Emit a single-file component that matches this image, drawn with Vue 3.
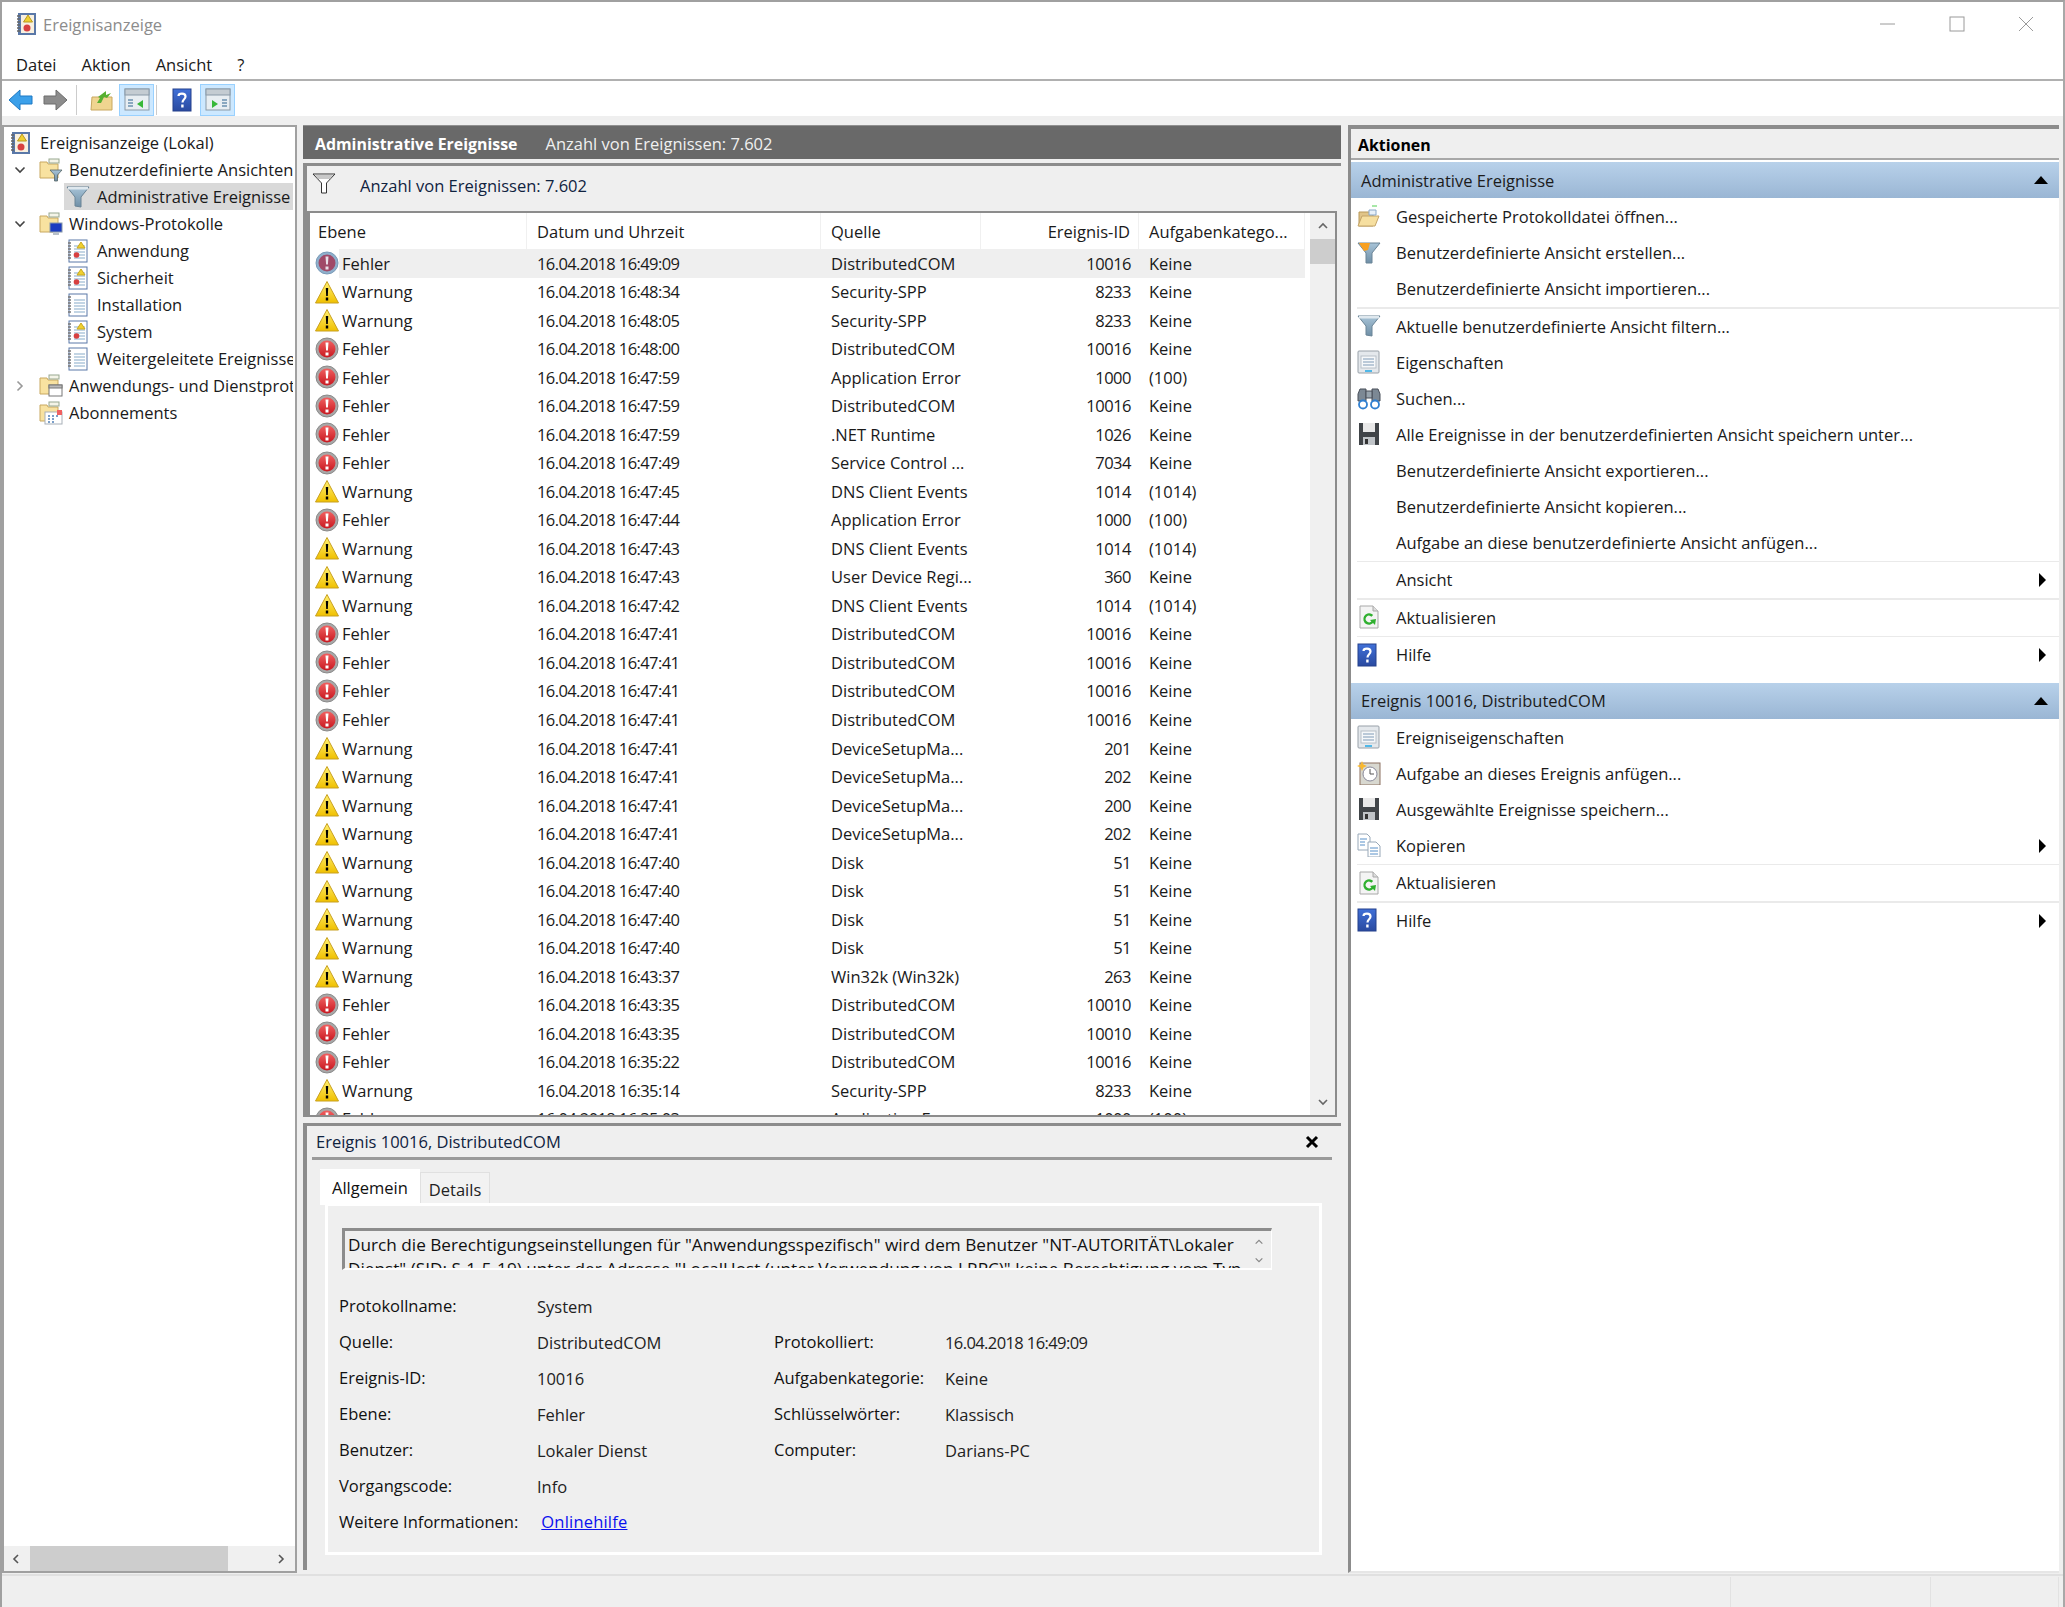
<template>
  <div class="win">
    <div class="titlebar">
      <svg class="appicon" viewBox="0 0 22 24"><use href="#ev-book" /></svg>
      <span class="title-text">Ereignisanzeige</span>
      <div class="winbtns">
        <svg width="16" height="16" viewBox="0 0 16 16"><path d="M0 8h15" stroke="#9a9a9a" fill="none" /></svg>
        <svg width="16" height="16" viewBox="0 0 16 16"><rect x="1" y="1" width="14" height="14" stroke="#9a9a9a" fill="none" /></svg>
        <svg width="16" height="16" viewBox="0 0 16 16"><path d="M1 1l14 14M15 1L1 15" stroke="#9a9a9a" fill="none" /></svg>
      </div>
    </div>

    <div class="menubar">
      <span>Datei</span><span>Aktion</span><span>Ansicht</span><span>?</span>
    </div>

    <div class="toolbar">
      <svg class="tb-ic first" viewBox="0 0 26 24"><path d="M1 12L12 2v6h12v8H12v6z" fill="#3ba0ea" stroke="#1c78c4" /></svg>
      <svg class="tb-ic" viewBox="0 0 26 24"><path d="M25 12L14 2v6H2v8h12v6z" fill="#8c8c8c" stroke="#6c6c6c" /></svg>
      <i class="tb-sep"></i>
      <svg class="tb-ic up" viewBox="0 0 24 24"><path d="M2 9h20v13H1z" fill="#f0d590" stroke="#c9a860" /><path d="M7 15l3-5-2-1 8-6v4l5-2-4 5-3-1-3 6z" fill="#58b030" /></svg>
      <span class="tb-on"><svg width="26" height="24" viewBox="0 0 26 24"><use href="#pane" /><path d="M19 12v8l-6-4z" fill="#38b838" /><path d="M4 12h5M4 15h5M4 18h5" stroke="#8aa8c0" stroke-width="2" /></svg></span>
      <i class="tb-sep"></i>
      <svg class="tb-ic help" viewBox="0 0 20 24"><use href="#help" /></svg>
      <span class="tb-on"><svg width="26" height="24" viewBox="0 0 26 24"><use href="#pane" /><path d="M7 12v8l6-4z" fill="#38b838" /><path d="M17 12h5M17 15h5M17 18h5" stroke="#8aa8c0" stroke-width="2" /></svg></span>
    </div>

    <div class="panes">
      <aside class="tree">
        <div class="tree-scroll">
          <div v-for="n in tree" :key="n.label" class="node" :class="['lv' + n.level, { on: n.on }]">
            <span class="twist">
              <svg v-if="n.twist" width="12" height="12" viewBox="0 0 12 12">
                <path v-if="n.twist === 'open'" d="M1.5 3.5L6 8l4.5-4.5" stroke="#444" stroke-width="1.6" fill="none" />
                <path v-else d="M3.5 1.5L8 6l-4.5 4.5" stroke="#999" stroke-width="1.6" fill="none" />
              </svg>
            </span>
            <svg class="node-ic" viewBox="0 0 24 24"><use :href="'#' + n.icon" /></svg>
            <span class="node-label">{{ n.label }}</span>
          </div>
        </div>
        <div class="hscroll">
          <svg width="12" height="12" viewBox="0 0 12 12"><path d="M8 2L4 6l4 4" stroke="#555" stroke-width="1.6" fill="none" /></svg>
          <div class="hthumb"></div>
          <svg width="12" height="12" viewBox="0 0 12 12"><path d="M4 2l4 4-4 4" stroke="#555" stroke-width="1.6" fill="none" /></svg>
        </div>
      </aside>

      <main class="center">
        <div class="darkbar">
          <b>Administrative Ereignisse</b>
          <span>Anzahl von Ereignissen: 7.602</span>
        </div>

        <section class="listpanel">
          <div class="filterbar">
            <svg width="24" height="22" viewBox="0 0 24 22"><use href="#funnel-plain" /></svg>
            <span>Anzahl von Ereignissen: 7.602</span>
          </div>
          <div class="listbox">
            <div class="listmain">
              <div class="thead">
                <div class="c-level">Ebene</div>
                <div class="c-date">Datum und Uhrzeit</div>
                <div class="c-src">Quelle</div>
                <div class="c-id">Ereignis-ID</div>
                <div class="c-cat">Aufgabenkatego...</div>
              </div>
              <div class="tbody">
                <div v-for="(r, i) in rows" :key="i" class="row" :class="{ sel: i === 0 }">
                  <div class="c-level">
                    <svg class="lvl-ic" viewBox="0 0 24 24"><use :href="r[0] === 'F' ? (i === 0 ? '#err-sel' : '#err') : '#warn'" /></svg>
                    <span class="lvl-text">{{ r[0] === 'F' ? 'Fehler' : 'Warnung' }}</span>
                  </div>
                  <div class="c-date">16.04.2018 {{ r[1] }}</div>
                  <div class="c-src">{{ r[2] }}</div>
                  <div class="c-id">{{ r[3] }}</div>
                  <div class="c-cat">{{ r[4] }}</div>
                </div>
              </div>
            </div>
            <div class="vscroll">
              <svg width="12" height="12" viewBox="0 0 12 12"><path d="M2 8l4-4 4 4" stroke="#666" stroke-width="1.6" fill="none" /></svg>
              <div class="vthumb"></div>
              <div class="vfill"></div>
              <svg width="12" height="12" viewBox="0 0 12 12"><path d="M2 4l4 4 4-4" stroke="#666" stroke-width="1.6" fill="none" /></svg>
            </div>
          </div>
        </section>

        <section class="detail">
          <div class="detail-head">
            <span>Ereignis 10016, DistributedCOM</span>
            <svg width="14" height="14" viewBox="0 0 14 14"><path d="M2 2l10 10M12 2L2 12" stroke="#000" stroke-width="3" fill="none" /></svg>
          </div>
          <div class="tabs">
            <div class="tab active">Allgemein</div>
            <div class="tab">Details</div>
          </div>
          <div class="tabbody">
            <div class="msgbox">
              <div class="msgtext">Durch die Berechtigungseinstellungen für "Anwendungsspezifisch" wird dem Benutzer "NT-AUTORITÄT\Lokaler Dienst" (SID: S-1-5-19) unter der Adresse "LocalHost (unter Verwendung von LRPC)" keine Berechtigung vom Typ</div>
              <div class="msgscroll">
                <svg width="10" height="10" viewBox="0 0 12 12"><path d="M2 8l4-4 4 4" stroke="#888" stroke-width="1.5" fill="none" /></svg>
                <svg width="10" height="10" viewBox="0 0 12 12"><path d="M2 4l4 4 4-4" stroke="#888" stroke-width="1.5" fill="none" /></svg>
              </div>
            </div>
            <div class="fields">
              <template v-for="f in fields" :key="f[0]">
                <div class="f-label">{{ f[0] }}</div>
                <div class="f-val">{{ f[1] }}</div>
                <div class="f-label">{{ f[2] }}</div>
                <div class="f-val" :class="{ tight: f[0] === 'Quelle:' }">{{ f[3] }}</div>
              </template>
            </div>
            <div class="moreinfo">
              <span class="f-label">Weitere Informationen:</span>
              <a href="#" class="link">Onlinehilfe</a>
            </div>
          </div>
        </section>
      </main>

      <aside class="actions">
        <div class="act-title">Aktionen</div>
        <template v-for="s in actionGroups" :key="s.head">
          <div class="act-head">
            <span>{{ s.head }}</span>
            <svg width="14" height="8" viewBox="0 0 14 8"><path d="M0 8L7 0l7 8z" fill="#000" /></svg>
          </div>
          <template v-for="a in s.items" :key="a.label">
            <div class="act-row">
              <span class="act-ic"><svg v-if="a.icon" width="24" height="24" viewBox="0 0 24 24"><use :href="'#' + a.icon" /></svg></span>
              <span class="act-label">{{ a.label }}</span>
              <svg v-if="a.sub" class="act-sub" width="7" height="14" viewBox="0 0 7 14"><path d="M0 0l7 7-7 7z" fill="#000" /></svg>
            </div>
            <div v-if="a.sep" class="act-sep"></div>
          </template>
        </template>
      </aside>
    </div>

    <div class="statusbar">
      <i></i><i></i><i></i>
    </div>

    <!-- gemeinsame Icons -->
    <svg class="defs" width="0" height="0">
      <defs>
        <linearGradient id="g-err" x1="0" y1="0" x2="0" y2="1"><stop offset="0" stop-color="#f06060" /><stop offset="1" stop-color="#c81820" /></linearGradient>
        <linearGradient id="g-warn" x1="0" y1="0" x2="0" y2="1"><stop offset="0" stop-color="#fff070" /><stop offset="1" stop-color="#f0c000" /></linearGradient>
        <linearGradient id="g-help" x1="0" y1="0" x2="0" y2="1"><stop offset="0" stop-color="#4070d8" /><stop offset="1" stop-color="#2a4aa0" /></linearGradient>
        <linearGradient id="g-funnel" x1="0" y1="0" x2="0" y2="1"><stop offset="0" stop-color="#a8c4d8" /><stop offset="1" stop-color="#6f8fa6" /></linearGradient>
        <g id="err">
          <circle cx="12" cy="12" r="11" fill="#a8a8a8" stroke="#8a8a8a" />
          <circle cx="12" cy="12" r="8.5" fill="url(#g-err)" />
          <path d="M10.500 5.500h3l-.6 8h-1.800zM10.500 15.500h3v3h-3z" fill="#fff" />
        </g>
        <g id="err-sel">
          <circle cx="12" cy="12" r="11" fill="#8fb0cc" stroke="#7a9ab8" />
          <circle cx="12" cy="12" r="8.5" fill="#a04a68" />
          <path d="M10.500 5.500h3l-.6 8h-1.800zM10.500 15.500h3v3h-3z" fill="#e8e0e8" />
        </g>
        <g id="warn">
          <path d="M12 1.500L23.500 23H.5z" fill="url(#g-warn)" stroke="#c8a020" stroke-linejoin="round" />
          <path d="M10.800 8h2.400l-.4 8h-1.600zM10.800 17.500h2.400v3h-2.400z" fill="#000" />
        </g>
        <g id="help">
          <rect x="1" y="1" width="18" height="22" fill="url(#g-help)" stroke="#24408c" />
          <path d="M6.500 8c0-3 7-3.500 7 .5 0 3-3 2.500-3 6" stroke="#fff" stroke-width="2.2" fill="none" />
          <rect x="9.200" y="16.500" width="2.4" height="3" fill="#fff" />
        </g>
        <g id="pane">
          <rect x="1" y="1" width="24" height="21" fill="#e8eef2" stroke="#8a9aa8" />
          <rect x="1" y="1" width="24" height="6" fill="#c4ccd2" stroke="#8a9aa8" />
        </g>
        <g id="book">
          <rect x="3" y="1" width="18" height="22" fill="#fff" stroke="#5a78a8" />
          <path d="M2 4h3M2 7h3M2 10h3M2 13h3M2 16h3M2 19h3" stroke="#777" stroke-width="1.4" />
          <path d="M8 7h11M8 10h11M8 13h11M8 16h11M8 19h11" stroke="#b0c8dc" stroke-width="1.4" />
        </g>
        <g id="logbook">
          <use href="#book" />
          <path d="M15 3l4 6h-8z" fill="#f0d030" stroke="#c8a820" />
          <circle cx="10.5" cy="16" r="2.8" fill="#d84040" />
        </g>
        <g id="ev-book">
          <rect x="3" y="1" width="18" height="22" fill="#5a78a8" />
          <rect x="6" y="3" width="13" height="18" fill="#f8f0e0" />
          <path d="M2 4h3M2 7h3M2 10h3M2 13h3M2 16h3M2 19h3" stroke="#666" stroke-width="1.4" />
          <path d="M13 3l4.500 7h-9z" fill="#f0d030" stroke="#b89820" />
          <circle cx="12" cy="16" r="3.5" fill="#d84040" />
        </g>
        <g id="folder">
          <path d="M1 20V4h7l1 2h10v14z" fill="#f8e2a0" stroke="#c8a860" />
          <rect x="10" y="1" width="10" height="4" fill="#f4f4e8" stroke="#98a890" />
        </g>
        <g id="folder-filter">
          <use href="#folder" />
          <path d="M11 12h12l-4.500 5v6h-3v-6z" fill="url(#g-funnel)" stroke="#566" stroke-width=".8" />
        </g>
        <g id="folder-win">
          <use href="#folder" />
          <rect x="11" y="11" width="12" height="9" fill="#1c3cc0" stroke="#8898a8" />
          <path d="M14 20h6v3h-6z" fill="#b8c0c8" />
        </g>
        <g id="folder-app">
          <use href="#folder" />
          <rect x="10" y="11" width="13" height="11" fill="#fff" stroke="#777" />
          <rect x="10" y="11" width="13" height="3" fill="#bbb" stroke="#777" />
        </g>
        <g id="folder-sub">
          <use href="#folder" />
          <rect x="6" y="11" width="17" height="12" fill="#fff" stroke="#a8b0b8" />
          <rect x="18" y="9" width="5" height="5" fill="#f06060" />
          <path d="M9 15h2M13 15h2M17 15h2M9 18h2M13 18h2M9 21h2M13 21h2" stroke="#5080b8" stroke-width="1.4" />
        </g>
        <g id="funnel">
          <path d="M1 2h22l-8 10v10l-6-1V12z" fill="url(#g-funnel)" stroke="#6a8496" />
          <path d="M2 2h20v2.500H2z" fill="#dfe8ee" />
        </g>
        <g id="funnel-plain">
          <path d="M1 2h22l-8.500 9v10h-5V11z" fill="#fff" stroke="#333" />
          <path d="M3 3h18l-3 4H6z" fill="#c8c8c8" />
        </g>
        <g id="funnel-new">
          <path d="M1 2h22l-8 10v10h-6V12z" fill="url(#g-funnel)" stroke="#6a8496" />
          <path d="M2 2h11l-2 7-4 1z" fill="#f8a020" />
        </g>
        <g id="open">
          <path d="M2 7h14v14H2z" fill="#e0c488" stroke="#b89858" />
          <path d="M1 21l4-10h17l-4 10z" fill="#f6dfa0" stroke="#c4a468" />
          <path d="M12 5h7v5h-7z" fill="#e8f0f8" stroke="#8aa8c8" />
          <path d="M15 1h5" stroke="#50d050" />
        </g>
        <g id="props">
          <rect x="1" y="1" width="21" height="22" rx="1" fill="#e4e8ec" stroke="#98a0a8" />
          <rect x="4" y="6" width="15" height="12" fill="#f6f8fa" stroke="#b8c0c8" />
          <path d="M6 9h11M6 12h11M6 15h11" stroke="#7f9ab5" stroke-width="1.2" />
          <rect x="8" y="20" width="7" height="2" fill="#50b8e8" />
        </g>
        <g id="binoc">
          <path d="M3 3h6v12H1V8zM15 3h6l2 5v7h-8z" fill="#7c8894" stroke="#484e58" />
          <rect x="9" y="5" width="6" height="7" fill="#98a4ae" stroke="#484e58" />
          <circle cx="6" cy="18.500" r="4" fill="#fff" stroke="#2f7fd0" stroke-width="1.8" />
          <circle cx="18" cy="18.500" r="4" fill="#fff" stroke="#2f7fd0" stroke-width="1.8" />
        </g>
        <g id="disk">
          <path d="M2 1h20v22H2z" fill="#404448" />
          <rect x="6" y="1" width="12" height="9" fill="#e8e8e8" />
          <rect x="6" y="15" width="12" height="8" fill="#c0c4c8" />
          <rect x="8" y="17" width="3" height="5" fill="#333" />
        </g>
        <g id="refresh">
          <path d="M3 1h13l5 5v17H3z" fill="#f4f4f4" stroke="#a8a8a8" />
          <path d="M16 1v5h5" fill="#ddd" stroke="#a8a8a8" />
          <circle cx="12" cy="14" r="4.500" fill="none" stroke="#30b030" stroke-width="2.4" stroke-dasharray="22 6" transform="rotate(30 12 14)" />
          <path d="M13 15l6-1-1 6z" fill="#30b030" />
        </g>
        <g id="task">
          <rect x="3" y="2" width="20" height="22" fill="#d8d8d0" stroke="#8c7060" />
          <circle cx="13" cy="13" r="7" fill="#fff" stroke="#889" />
          <path d="M13 8v5h4" stroke="#555" fill="none" />
          <path d="M5 0l1.500 3.500L10 5 6.500 6.500 5 10 3.500 6.500 0 5l3.500-1.500z" fill="#f8b830" />
        </g>
        <g id="copy">
          <path d="M1 1h9l3 3v13H1z" fill="#fff" stroke="#98a8b8" />
          <path d="M11 9h8l4 4v11H11z" fill="#fff" stroke="#98a8b8" />
          <path d="M3 6h7M3 9h5M3 12h5M13 15h8M13 18h8M13 21h8" stroke="#5890c8" />
        </g>
      </defs>
    </svg>
  </div>
</template>

<script setup>
const tree = [
  { level: 0, icon: 'ev-book', label: 'Ereignisanzeige (Lokal)' },
  { level: 1, icon: 'folder-filter', label: 'Benutzerdefinierte Ansichten', twist: 'open' },
  { level: 2, icon: 'funnel', label: 'Administrative Ereignisse', on: true },
  { level: 1, icon: 'folder-win', label: 'Windows-Protokolle', twist: 'open' },
  { level: 2, icon: 'logbook', label: 'Anwendung' },
  { level: 2, icon: 'logbook', label: 'Sicherheit' },
  { level: 2, icon: 'book', label: 'Installation' },
  { level: 2, icon: 'logbook', label: 'System' },
  { level: 2, icon: 'book', label: 'Weitergeleitete Ereignisse' },
  { level: 1, icon: 'folder-app', label: 'Anwendungs- und Dienstprotokolle', twist: 'closed' },
  { level: 1, icon: 'folder-sub', label: 'Abonnements' }
]

const D = 'DistributedCOM'
const S = 'Security-SPP'
const DNS = 'DNS Client Events'
const DSM = 'DeviceSetupMa...'
const rows = [
  ['F', '16:49:09', D, '10016', 'Keine'],
  ['W', '16:48:34', S, '8233', 'Keine'],
  ['W', '16:48:05', S, '8233', 'Keine'],
  ['F', '16:48:00', D, '10016', 'Keine'],
  ['F', '16:47:59', 'Application Error', '1000', '(100)'],
  ['F', '16:47:59', D, '10016', 'Keine'],
  ['F', '16:47:59', '.NET Runtime', '1026', 'Keine'],
  ['F', '16:47:49', 'Service Control ...', '7034', 'Keine'],
  ['W', '16:47:45', DNS, '1014', '(1014)'],
  ['F', '16:47:44', 'Application Error', '1000', '(100)'],
  ['W', '16:47:43', DNS, '1014', '(1014)'],
  ['W', '16:47:43', 'User Device Regi...', '360', 'Keine'],
  ['W', '16:47:42', DNS, '1014', '(1014)'],
  ['F', '16:47:41', D, '10016', 'Keine'],
  ['F', '16:47:41', D, '10016', 'Keine'],
  ['F', '16:47:41', D, '10016', 'Keine'],
  ['F', '16:47:41', D, '10016', 'Keine'],
  ['W', '16:47:41', DSM, '201', 'Keine'],
  ['W', '16:47:41', DSM, '202', 'Keine'],
  ['W', '16:47:41', DSM, '200', 'Keine'],
  ['W', '16:47:41', DSM, '202', 'Keine'],
  ['W', '16:47:40', 'Disk', '51', 'Keine'],
  ['W', '16:47:40', 'Disk', '51', 'Keine'],
  ['W', '16:47:40', 'Disk', '51', 'Keine'],
  ['W', '16:47:40', 'Disk', '51', 'Keine'],
  ['W', '16:43:37', 'Win32k (Win32k)', '263', 'Keine'],
  ['F', '16:43:35', D, '10010', 'Keine'],
  ['F', '16:43:35', D, '10010', 'Keine'],
  ['F', '16:35:22', D, '10016', 'Keine'],
  ['W', '16:35:14', S, '8233', 'Keine'],
  ['F', '16:35:03', 'Application Error', '1000', '(100)']
]

const fields = [
  ['Protokollname:', 'System', '', ''],
  ['Quelle:', 'DistributedCOM', 'Protokolliert:', '16.04.2018 16:49:09'],
  ['Ereignis-ID:', '10016', 'Aufgabenkategorie:', 'Keine'],
  ['Ebene:', 'Fehler', 'Schlüsselwörter:', 'Klassisch'],
  ['Benutzer:', 'Lokaler Dienst', 'Computer:', 'Darians-PC'],
  ['Vorgangscode:', 'Info', '', '']
]

const actionGroups = [
  {
    head: 'Administrative Ereignisse',
    items: [
      { icon: 'open', label: 'Gespeicherte Protokolldatei öffnen...' },
      { icon: 'funnel-new', label: 'Benutzerdefinierte Ansicht erstellen...' },
      { label: 'Benutzerdefinierte Ansicht importieren...', sep: true },
      { icon: 'funnel', label: 'Aktuelle benutzerdefinierte Ansicht filtern...' },
      { icon: 'props', label: 'Eigenschaften' },
      { icon: 'binoc', label: 'Suchen...' },
      { icon: 'disk', label: 'Alle Ereignisse in der benutzerdefinierten Ansicht speichern unter...' },
      { label: 'Benutzerdefinierte Ansicht exportieren...' },
      { label: 'Benutzerdefinierte Ansicht kopieren...' },
      { label: 'Aufgabe an diese benutzerdefinierte Ansicht anfügen...', sep: true },
      { label: 'Ansicht', sub: true, sep: true },
      { icon: 'refresh', label: 'Aktualisieren', sep: true },
      { icon: 'help', label: 'Hilfe', sub: true }
    ]
  },
  {
    head: 'Ereignis 10016, DistributedCOM',
    items: [
      { icon: 'props', label: 'Ereigniseigenschaften' },
      { icon: 'task', label: 'Aufgabe an dieses Ereignis anfügen...' },
      { icon: 'disk', label: 'Ausgewählte Ereignisse speichern...' },
      { icon: 'copy', label: 'Kopieren', sub: true, sep: true },
      { icon: 'refresh', label: 'Aktualisieren', sep: true },
      { icon: 'help', label: 'Hilfe', sub: true }
    ]
  }
]
</script>

<style>
html, body {
  margin: 0;
  background: #efefef;
}
</style>

<style scoped>
.win {
  width: 2065px;
  height: 1607px;
  box-sizing: border-box;
  border-top: 2px solid #a0a0a0;
  border-left: 2px solid #a0a0a0;
  border-right: 2px solid #a8a8a8;
  display: flex;
  flex-direction: column;
  overflow: hidden;
  font-family: "Open Sans", sans-serif;
  font-size: 16.5px;
  color: #1a1a1a;
  background: #efefef;
}

.titlebar {
  height: 47px;
  flex: none;
  box-sizing: border-box;
  background: #fff;
  display: flex;
  align-items: center;
  padding: 0 0 3px 13px;
  gap: 6px;
}
.appicon { width: 22px; height: 24px; }
.title-text { color: #8c8c8c; }
.winbtns {
  margin-left: auto;
  display: flex;
  gap: 53px;
  padding-right: 29px;
}

.menubar {
  height: 32px;
  flex: none;
  box-sizing: border-box;
  background: #fff;
  border-bottom: 2px solid #b0b0b0;
  display: flex;
  align-items: center;
  padding: 0 0 0 14px;
  gap: 25px;
}

.toolbar {
  height: 35px;
  flex: none;
  box-sizing: border-box;
  background: #fff;
  display: flex;
  align-items: center;
  padding: 2px 0 0 6px;
}
.tb-ic { width: 26px; height: 24px; margin-right: 8px; }
.tb-ic.up { margin: 0 4px 0 12px; }
.tb-ic.help { width: 20px; height: 24px; margin: 0 8px 0 15px; }
.tb-sep { width: 1px; height: 30px; background: #ccc; }
.tb-on {
  width: 35px;
  height: 32px;
  box-sizing: border-box;
  background: #cce8ff;
  border: 1px solid #99d1ff;
  display: flex;
  align-items: center;
  justify-content: center;
  margin-right: 2px;
}

.panes {
  flex: 1;
  min-height: 0;
  display: flex;
  padding-top: 9px;
  gap: 6px;
}

.tree {
  width: 295px;
  flex: none;
  box-sizing: border-box;
  background: #fff;
  border: 2px solid #a0a0a0;
  display: flex;
  flex-direction: column;
  margin-bottom: 1px;
}
.tree-scroll {
  flex: 1;
  overflow: hidden;
  padding-top: 2px;
  margin-right: 2px;
}
.node {
  height: 27px;
  display: flex;
  align-items: center;
  white-space: nowrap;
  overflow: hidden;
}
.node.lv0 { padding-left: 5px; }
.node.lv1 { padding-left: 10px; }
.node.lv2 { padding-left: 62px; }
.node.on { background: linear-gradient(#d9d9d9, #d9d9d9) no-repeat 60px 0 / 100% 100%; }
.twist { display: none; width: 12px; margin-right: 13px; flex: none; }
.lv1 .twist { display: flex; }
.node-ic { width: 24px; height: 24px; flex: none; margin-right: 6px; }
.lv0 .node-ic { margin-right: 7px; }
.lv2 .node-ic { margin-right: 7px; }

.hscroll {
  height: 25px;
  flex: none;
  background: #f0f0f0;
  display: flex;
  align-items: center;
  justify-content: space-between;
  padding: 0 8px 0 6px;
}
.hthumb {
  height: 100%;
  width: 198px;
  background: #cdcdcd;
  margin: 0 auto 0 8px;
}

.center {
  width: 1038px;
  flex: none;
  display: flex;
  flex-direction: column;
}
.darkbar {
  height: 34px;
  flex: none;
  background: #696969;
  border-top: 1px solid #909090;
  box-sizing: border-box;
  color: #f0f0f0;
  display: flex;
  align-items: center;
  padding: 2px 0 0 12px;
  gap: 28px;
}
.darkbar b { color: #fff; font-weight: 700; font-size: 15.9px; }

.listpanel {
  height: 954px;
  flex: none;
  margin-top: 4px;
  box-sizing: border-box;
  border-top: 3px solid #8c8c8c;
  border-left: 4px solid #8c8c8c;
  display: flex;
  flex-direction: column;
  padding-right: 4px;
}
.filterbar {
  height: 47px;
  flex: none;
  box-sizing: border-box;
  display: flex;
  align-items: flex-start;
  padding: 6px 0 0 5px;
  gap: 24px;
  background: #efefef;
  border-bottom: 2px solid #8c8c8c;
  color: #10233f;
}
.filterbar span { line-height: 24px; margin-top: 2px; }
.listbox {
  flex: 1;
  min-height: 0;
  display: flex;
  background: #fff;
  border-right: 2px solid #8c8c8c;
  border-bottom: 2px solid #8c8c8c;
  border-left: 3px solid #8c8c8c;
}
.listmain {
  flex: 1;
  min-width: 0;
  overflow: hidden;
}
.thead, .row {
  display: grid;
  grid-template-columns: 217px 294px 160px 158px 1fr;
  align-items: center;
  white-space: nowrap;
}
.thead { height: 36px; }
.thead > div {
  border-right: 1px solid #f0f0f0;
  height: 100%;
  display: flex;
  align-items: center;
  box-sizing: border-box;
}
.row { height: 28.52px; }
.thead .c-level { padding-left: 8px; }
.c-date { padding-left: 10px; }
.row .c-date { letter-spacing: -0.6px; }
.c-src { padding-left: 10px; overflow: hidden; }
.c-id { text-align: right; padding-right: 8px; }
.row .c-id { letter-spacing: -0.5px; }
.thead .c-id { justify-content: flex-end; }
.c-cat { padding-left: 10px; }
.row .c-level {
  display: flex;
  align-items: center;
  padding-left: 5px;
}
.lvl-ic { width: 24px; height: 24px; flex: none; margin-right: 3px; }
.row.sel {
  background: linear-gradient(#efefef, #efefef) no-repeat 29px 0 / 100% 100%;
}
.vscroll {
  width: 25px;
  flex: none;
  margin-left: 5px;
  background: #f0f0f0;
  display: flex;
  flex-direction: column;
  align-items: center;
}
.vscroll svg { margin: 7px 0; flex: none; }
.vthumb {
  width: 100%;
  height: 25px;
  background: #cdcdcd;
}
.vfill { flex: 1; }

.detail {
  flex: 1;
  min-height: 0;
  margin: 6px 0 4px;
  border-top: 3px solid #8c8c8c;
  border-left: 4px solid #8c8c8c;
  padding: 0 9px 0 5px;
  display: flex;
  flex-direction: column;
}
.detail-head {
  height: 31px;
  flex: none;
  border-bottom: 3px solid #9a9a9a;
  display: flex;
  align-items: center;
  justify-content: space-between;
  padding: 0 13px 0 4px;
  color: #10233f;
}
.tabs {
  display: flex;
  align-items: flex-start;
  height: 43px;
  flex: none;
  padding-left: 8px;
}
.tab {
  height: 31px;
  margin-top: 12px;
  padding: 3px 8px 0;
  border: 1px solid #e0e0e0;
  border-bottom: none;
  box-sizing: border-box;
  display: flex;
  align-items: center;
  background: #f2f2f2;
  color: #222;
}
.tab.active {
  height: 36px;
  margin-top: 9px;
  padding: 0 11px;
  background: #fff;
  border-color: #fff;
  position: relative;
  color: #111;
}
.tabbody {
  flex: 1;
  min-height: 0;
  margin: 0 10px 15px 13px;
  border: 3px solid #fff;
  padding: 22px 0 0 14px;
}
.msgbox {
  width: 930px;
  height: 42px;
  box-sizing: border-box;
  border-top: 3px solid #8c8c8c;
  border-left: 3px solid #8c8c8c;
  border-right: 1px solid #fff;
  border-bottom: 2px solid #fff;
  background: #efefef;
  display: flex;
  overflow: hidden;
}
.msgtext {
  flex: 1;
  padding: 2px 0 0 3px;
  font-size: 17.2px;
  line-height: 24px;
  height: 35px;
  overflow: hidden;
  color: #111;
}
.msgscroll {
  width: 25px;
  flex: none;
  display: flex;
  flex-direction: column;
  align-items: center;
  gap: 8px;
  padding-top: 6px;
}
.fields {
  margin-top: 17px;
  display: grid;
  grid-template-columns: 198px 237px 171px 1fr;
  grid-auto-rows: 36px;
  align-items: center;
  margin-left: -3px;
}
.f-label { color: #111; }
.f-val { padding-top: 3px; color: #222; }
.f-val.tight { letter-spacing: -0.6px; }
.moreinfo {
  margin-left: -3px;
  display: flex;
  height: 36px;
  align-items: center;
  gap: 23px;
}
.link { color: #0a10ee; letter-spacing: 0.2px; }

.actions {
  flex: 1;
  min-width: 0;
  margin: 0 4px 1px 1px;
  box-sizing: border-box;
  background: #fff;
  border-top: 4px solid #8c8c8c;
  border-left: 3px solid #8c8c8c;
  border-bottom: 2px solid #e6e6e6;
}
.act-title {
  height: 31px;
  box-sizing: border-box;
  background: #efefef;
  font-weight: 700;
  font-size: 15.9px;
  color: #000;
  display: flex;
  align-items: center;
  padding: 2px 0 0 7px;
  border-bottom: 2px solid #a8a8a8;
  margin-bottom: 2px;
}
.act-head {
  height: 36px;
  background: linear-gradient(#b8d1ea, #9ab6d4);
  display: flex;
  align-items: center;
  justify-content: space-between;
  padding: 0 11px 0 10px;
  margin-bottom: 1px;
  color: #1c1c1c;
}
.act-row {
  height: 36px;
  box-sizing: border-box;
  display: flex;
  align-items: center;
  padding: 0 0 1px 6px;
  position: relative;
}
.act-ic { width: 24px; height: 24px; flex: none; margin-right: 15px; }
.act-sub { position: absolute; right: 13px; top: 11px; }
.act-sep {
  height: 1.5px;
  background: #eaeaea;
  margin-left: 6px;
}
.act-row + .act-head { margin-top: 9.5px; }

.statusbar {
  height: 33px;
  flex: none;
  box-sizing: border-box;
  border-top: 2px solid #e0e0e0;
  padding-top: 1px;
  display: flex;
  justify-content: flex-end;
}
.statusbar i {
  width: 1px;
  background: #e2e2e2;
  margin-right: 199px;
}
.statusbar i:nth-child(2) { margin-right: 127px; }
.statusbar i:nth-child(3) { margin-right: 4px; }
.defs { position: absolute; }
</style>
